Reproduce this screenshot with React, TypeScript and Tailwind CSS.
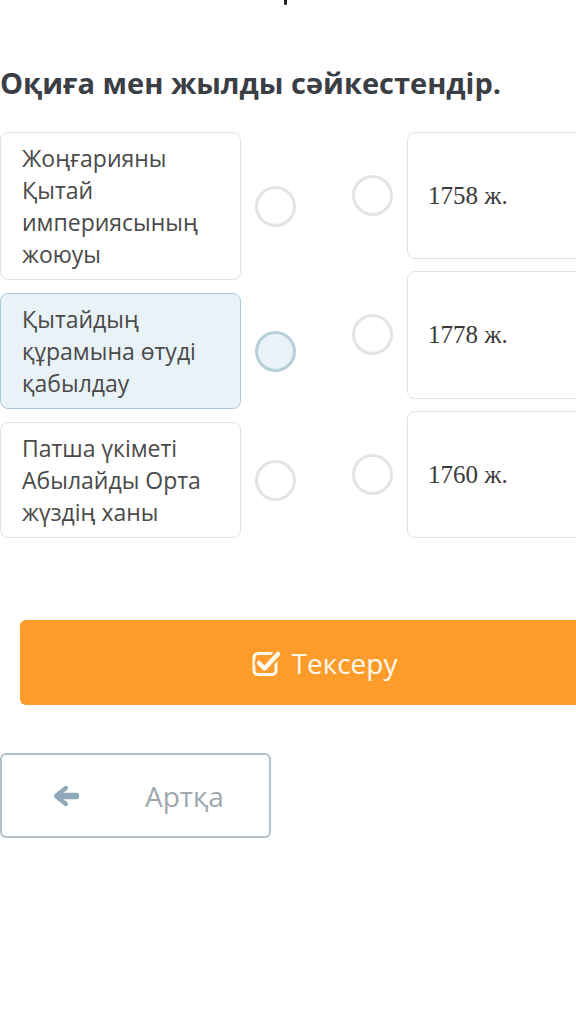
import React from 'react';

const events = [
  { id: 1, text: 'Жоңғарияны Қытай империясының жоюуы', active: false },
  { id: 2, text: 'Қытайдың құрамына өтуді қабылдау', active: true },
  { id: 3, text: 'Патша үкіметі Абылайды Орта жүздің ханы', active: false },
];

const years = ['1758 ж.', '1778 ж.', '1760 ж.'];

const CheckSquareIcon: React.FC<{ className?: string }> = ({ className }) => (
  <svg viewBox="0 0 30 28" className={className} fill="none">
    <rect x="2" y="4.5" width="22" height="21" rx="4" stroke="#fff8ec" strokeWidth="3" />
    <polyline points="7,14 12.5,19.5 26,5" stroke="#fd9c2b" strokeWidth="9" strokeLinecap="round" strokeLinejoin="round" />
    <polyline points="7,14 12.5,19.5 26,5" stroke="#fff8ec" strokeWidth="4.5" strokeLinecap="round" strokeLinejoin="round" />
  </svg>
);

// chunky left arrow, like the font-awesome solid one
const ArrowLeftIcon: React.FC<{ className?: string }> = ({ className }) => (
  <svg viewBox="0 0 28 24" className={className}>
    <path
      d="M12.5 2.2 L2.6 10.3 Q1.4 12 2.6 13.7 L12.5 21.8 Q14.6 23.2 15.8 21 Q16.6 19.3 15.2 17.9 L11.2 15.2 L25 15.2 Q27.2 15 27.2 12 Q27.2 9 25 8.8 L11.2 8.8 L15.2 6.1 Q16.6 4.7 15.8 3 Q14.6 0.8 12.5 2.2 Z"
      fill="currentColor"
    />
  </svg>
);

export default function App() {
  return (
    <div className="w-[576px] min-h-[1012px] bg-white overflow-hidden" style={{ fontFamily: '"Open Sans", "Noto Sans", sans-serif' }}>
      <div className="h-[6px] flex">
        <div className="ml-[284px] w-[3px] h-[5px] bg-[#222] rounded-b-sm" />
      </div>

      <h1 className="mt-[58px] text-[29px] leading-[38px] font-bold text-[#3b3f45] whitespace-nowrap">
        Оқиға мен жылды сәйкестендір.
      </h1>

      <div className="mt-[30px] flex items-stretch">
        <div className="flex flex-col gap-[13px]">
          {events.map(e => (
            <div key={e.id} className="flex items-center">
              <div
                className={`w-[241px] rounded-lg border pl-[21px] pr-[12px] pt-[9px] pb-[9px] text-[23px] leading-[32px] text-[#4a4a4a] ${
                  e.active ? 'bg-[#e9f2f6] border-[#a9cbd9]' : 'bg-white border-[#e0e3e5]'
                }`}
              >
                {e.text}
              </div>
              <div
                className={`ml-[14px] w-[41px] h-[41px] rounded-full border-[3px] shrink-0 ${
                  e.active ? 'bg-[#eaf3f7] border-[#b6d0db]' : 'bg-white border-[#e2e4e6]'
                }`}
              />
            </div>
          ))}
        </div>

        <div className="ml-[56px] flex flex-col gap-[12px]">
          {years.map(y => (
            <div key={y} className="flex-1 flex items-center">
              <div className="w-[41px] h-[41px] rounded-full border-[3px] border-[#e2e4e6] bg-white shrink-0" />
              <div
                className="ml-[14px] w-[241px] h-full flex items-center rounded-lg border border-[#e0e3e5] pl-[20px] text-[25px] text-[#3a3a3a]"
                style={{ fontFamily: '"Liberation Serif", "DejaVu Serif", serif' }}
              >
                {y}
              </div>
            </div>
          ))}
        </div>
      </div>

      <button className="mt-[82px] ml-[20px] w-[609px] h-[85px] rounded-md bg-[#fd9c2b] flex items-center justify-center gap-[10px] text-[28px] text-[#fff8ec]">
        <CheckSquareIcon className="w-[30px] h-[28px]" />
        <span>Тексеру</span>
      </button>

      <button className="mt-[48px] w-[271px] h-[85px] rounded-md border-2 border-[#b3c1ca] bg-white flex items-center pl-[50px] text-[28px] text-[#9ea8af]">
        <ArrowLeftIcon className="w-[28px] h-[24px] text-[#8fa9ba]" />
        <span className="ml-[65px]">Артқа</span>
      </button>
    </div>
  );
}
